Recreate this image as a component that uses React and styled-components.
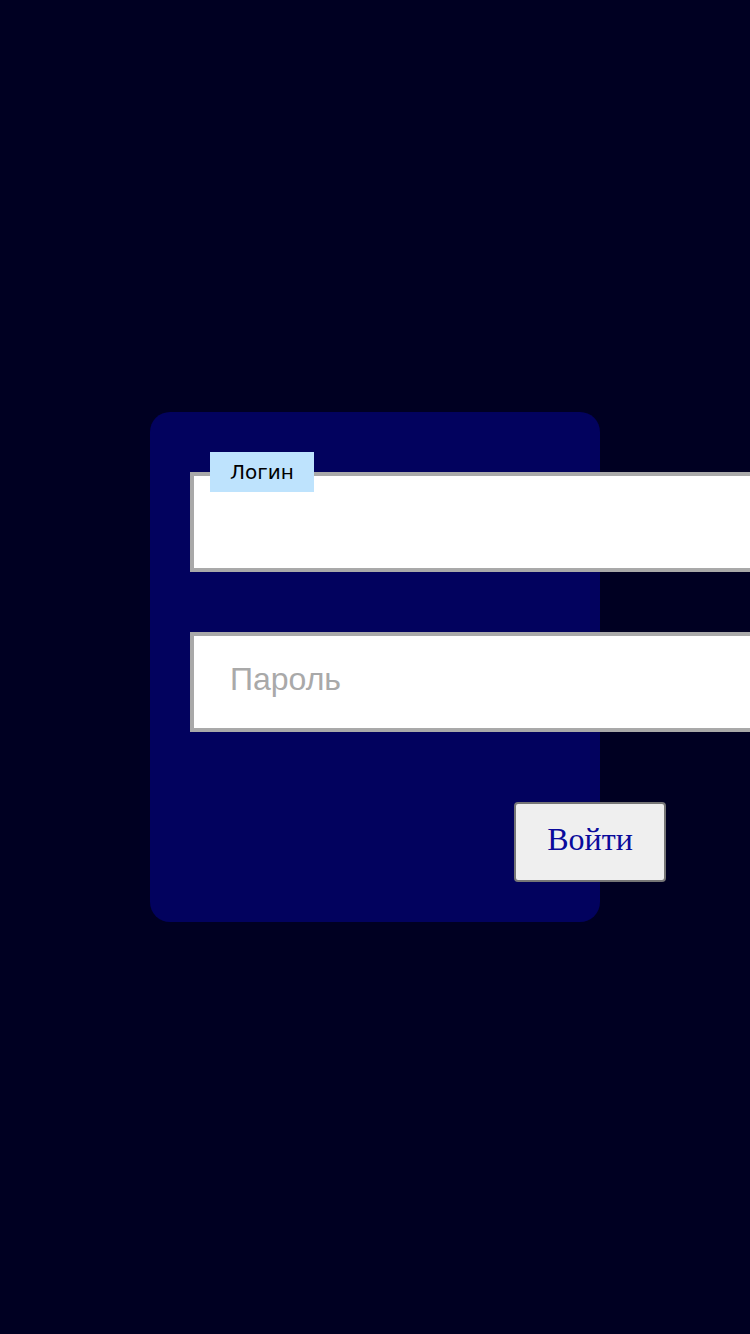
import styled, { createGlobalStyle } from "styled-components";

const GlobalStyle = createGlobalStyle`
  html, body {
    margin: 0;
    padding: 0;
    background-color: #000022;
    overflow: hidden;
  }
`;

const Page = styled.div`
  width: 750px;
  height: 1334px;
  display: flex;
  align-items: center;
  justify-content: center;
`;

const Card = styled.div`
  width: 450px;
  height: 510px;
  box-sizing: border-box;
  padding: 40px;
  background-color: #02025e;
  border-radius: 20px;
`;

const Form = styled.form`
  width: 476px;
  display: flex;
  flex-direction: column;
  padding-top: 20px;
`;

const Field = styled.div`
  position: relative;
  margin-bottom: ${({ $last }) => ($last ? "0" : "60px")};
`;

const Label = styled.label`
  position: absolute;
  left: 20px;
  top: -20px;
  height: 40px;
  line-height: 40px;
  padding: 0 20px;
  background-color: #bee3fd;
  color: #000;
  font-family: "DejaVu Sans", sans-serif;
  font-size: 20px;
`;

const Input = styled.input`
  display: block;
  width: 600px;
  height: 100px;
  box-sizing: border-box;
  padding: 0 36px 6px;
  border: 4px solid #a9a9a9;
  background: #fff;
  font-family: "Liberation Sans", Arial, sans-serif;
  font-size: 32px;
  outline: none;

  &::placeholder {
    color: #a9a9a9;
  }
`;

const Actions = styled.div`
  display: flex;
  justify-content: flex-end;
  margin-top: 70px;
`;

const Button = styled.button`
  width: 152px;
  height: 80px;
  padding: 0 0 6px;
  background-color: #efefef;
  border: 2px solid #767676;
  border-radius: 4px;
  color: #0a0a9c;
  font-family: "Liberation Serif", "Times New Roman", serif;
  font-size: 32px;
  cursor: pointer;
`;

export default function App() {
  return (
    <>
      <GlobalStyle />
      <Page>
        <Card>
          <Form onSubmit={(e) => e.preventDefault()}>
            <Field>
              <Label htmlFor="login">Логин</Label>
              <Input id="login" type="text" />
            </Field>
            <Field $last>
              <Input id="password" type="password" placeholder="Пароль" />
            </Field>
            <Actions>
              <Button type="submit">Войти</Button>
            </Actions>
          </Form>
        </Card>
      </Page>
    </>
  );
}
